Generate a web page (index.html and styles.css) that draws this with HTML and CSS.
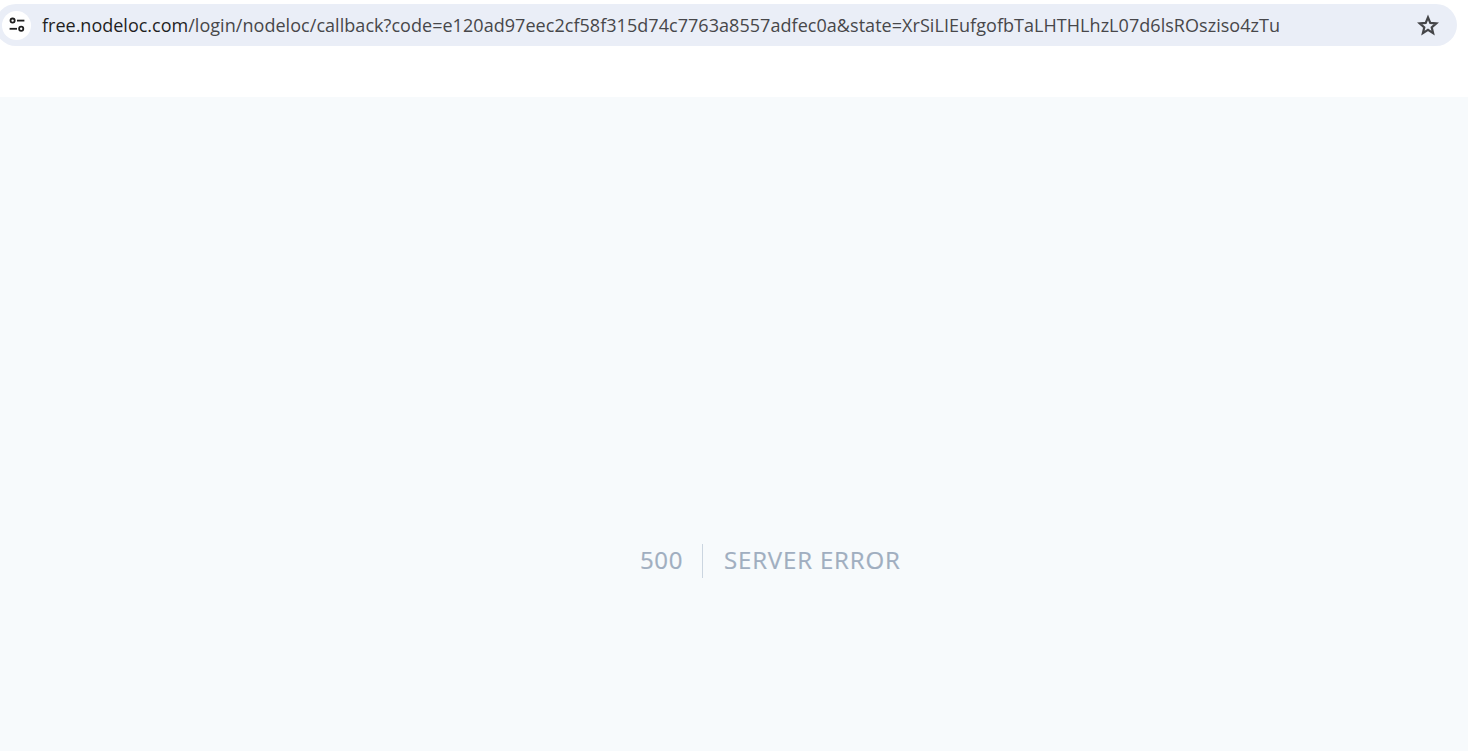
FILE: index.html
```html
<!DOCTYPE html>
<html lang="en">
<head>
<meta charset="utf-8">
<title>Server Error</title>
<link rel="stylesheet" href="styles.css">
</head>
<body>
<header class="chrome">
  <div class="omnibox">
    <span class="site-chip">
      <svg class="tune" width="16" height="16" viewBox="0 0 16 16" fill="none" stroke="#1f1f1f" stroke-width="1.8">
        <circle cx="3.6" cy="3.6" r="2.1"/>
        <path d="M8 3.6H15.4"/>
        <path d="M0.6 11.8H8"/>
        <circle cx="12.2" cy="11.8" r="2.1"/>
      </svg>
    </span>
    <span class="url"><span class="host">free.nodeloc.com</span>/login/nodeloc/callback?code=e120ad97eec2cf58f315d74c7763a8557adfec0a&amp;state=XrSiLIEufgofbTaLHTHLhzL07d6lsROsziso4zTu</span>
    <svg class="star" width="22" height="22" viewBox="0 0 22 22" fill="none" stroke="#444548" stroke-width="2.2" stroke-linejoin="miter">
      <path d="M11 3.4l2.3 5.5 6 .5-4.6 3.9 1.4 5.8L11 15.9l-5.1 3.2 1.4-5.8-4.6-3.9 6-.5z"/>
    </svg>
  </div>
</header>
<main class="page">
  <div class="error">
    <span class="code">500</span>
    <span class="message">SERVER ERROR</span>
  </div>
</main>
</body>
</html>
```
FILE: styles.css
```css
html, body {
  margin: 0;
  height: 100%;
  overflow: hidden;
  background: #ffffff;
}
body {
  display: flex;
  flex-direction: column;
}
.chrome {
  height: 97px;
  flex: none;
  padding: 4px 11px 0 0;
  box-sizing: border-box;
  overflow: hidden;
}
.omnibox {
  height: 42px;
  margin-left: -5px;
  padding: 0 18px 0 7px;
  border-radius: 21px;
  background: #eaeef7;
  display: flex;
  align-items: center;
}
.site-chip {
  width: 29px;
  height: 29px;
  border-radius: 50%;
  background: #ffffff;
  display: flex;
  align-items: center;
  justify-content: center;
  flex: none;
}
.url {
  margin-left: 11px;
  flex: 1;
  font-family: "Open Sans", "Noto Sans", sans-serif;
  font-size: 18px;
  line-height: 40px;
  color: #47474a;
  white-space: nowrap;
  letter-spacing: 0.046px;
}
.host {
  color: #1f1f1f;
  letter-spacing: 0;
}
.star {
  flex: none;
}
.page {
  flex: 1;
  background: #f7fafc;
  display: flex;
  align-items: flex-start;
  padding: 447px 0 0 640px;
  box-sizing: border-box;
}
.error {
  display: flex;
  align-items: stretch;
  font-family: "Open Sans", "Noto Sans", sans-serif;
  font-size: 24px;
  line-height: 32px;
  color: #a0aec0;
  -webkit-text-stroke: 0.2px #a0aec0;
}
.code {
  padding: 0 19px 2px 0;
  border-right: 1px solid #cbd5e0;
  letter-spacing: 0.6px;
}
.message {
  margin-left: 21px;
  padding-bottom: 2px;
  letter-spacing: 0.85px;
}
```
